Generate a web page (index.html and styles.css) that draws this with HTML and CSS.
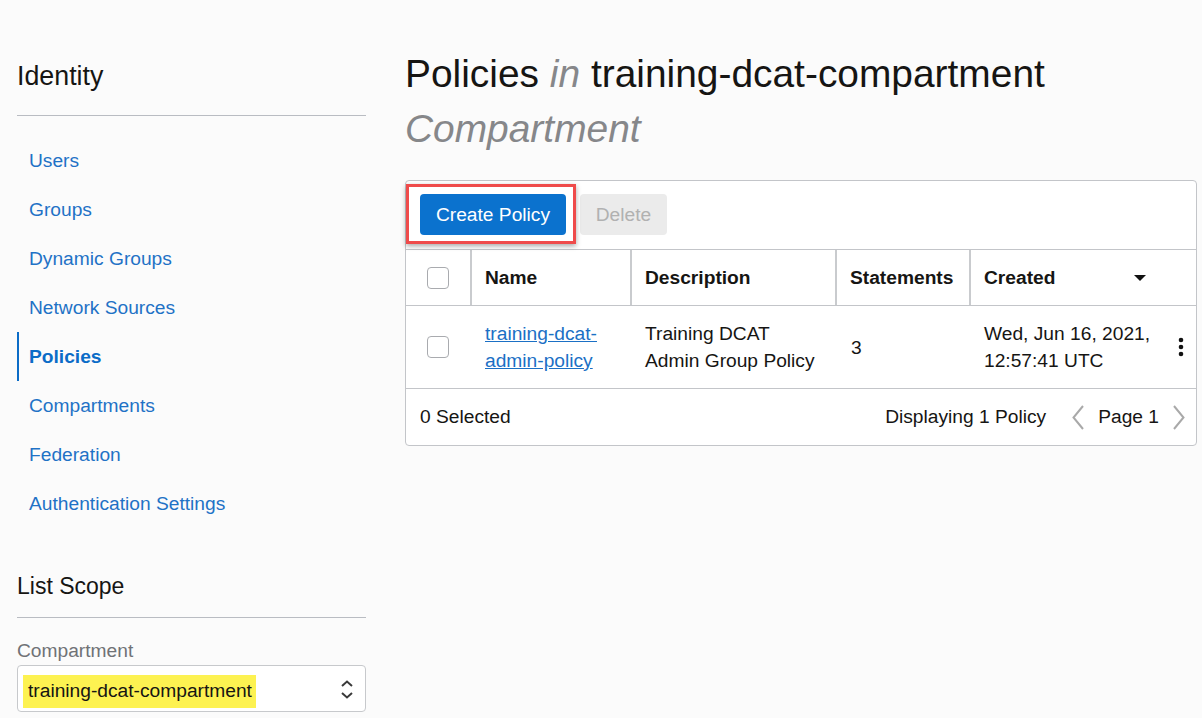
FILE: index.html
```html
<!DOCTYPE html>
<html lang="en">
<head>
<meta charset="utf-8">
<title>Policies</title>
<link rel="stylesheet" href="styles.css">
</head>
<body>
<div class="page">
  <aside class="sidebar">
    <h2 class="side-title">Identity</h2>
    <nav class="side-nav">
      <a class="nav-item" href="#">Users</a>
      <a class="nav-item" href="#">Groups</a>
      <a class="nav-item" href="#">Dynamic Groups</a>
      <a class="nav-item" href="#">Network Sources</a>
      <a class="nav-item active" href="#">Policies</a>
      <a class="nav-item" href="#">Compartments</a>
      <a class="nav-item" href="#">Federation</a>
      <a class="nav-item" href="#">Authentication Settings</a>
    </nav>
    <h3 class="scope-title">List Scope</h3>
    <div class="field-label">Compartment</div>
    <div class="select">
      <span class="select-value">training-dcat-compartment</span>
      <svg class="select-arrows" width="14" height="20" viewBox="0 0 14 20">
        <polyline points="2,6 7,1.5 12,6" fill="none" stroke="#3a3a3a" stroke-width="2"/>
        <polyline points="2,13 7,17.5 12,13" fill="none" stroke="#3a3a3a" stroke-width="2"/>
      </svg>
    </div>
  </aside>

  <main class="main">
    <h1 class="page-title">Policies <em class="muted">in</em> training-dcat-compartment <em class="muted">Compartment</em></h1>

    <section class="panel">
      <div class="toolbar">
        <div class="btn-wrap">
          <button class="btn btn-primary">Create Policy</button>
          <span class="highlight-box"></span>
        </div>
        <button class="btn btn-disabled">Delete</button>
      </div>

      <div class="grid head">
        <div class="cell cell-check"><span class="checkbox"></span></div>
        <div class="cell hcell">Name</div>
        <div class="cell hcell">Description</div>
        <div class="cell hcell">Statements</div>
        <div class="cell hcell sort-cell">Created
          <svg class="caret" width="12" height="6" viewBox="0 0 12 6"><polygon points="0,0 12,0 6,6" fill="#111"/></svg>
        </div>
      </div>

      <div class="grid row">
        <div class="cell cell-check"><span class="checkbox"></span></div>
        <div class="cell"><a class="link" href="#">training-dcat-admin-policy</a></div>
        <div class="cell">Training DCAT Admin Group Policy</div>
        <div class="cell cell-num">3</div>
        <div class="cell created-cell">
          <span>Wed, Jun 16, 2021,<br>12:57:41 UTC</span>
          <svg class="kebab" width="6" height="20" viewBox="0 0 6 20">
            <circle cx="3" cy="3" r="2.3" fill="#111"/>
            <circle cx="3" cy="10" r="2.3" fill="#111"/>
            <circle cx="3" cy="17" r="2.3" fill="#111"/>
          </svg>
        </div>
      </div>

      <div class="footer">
        <span>0 Selected</span>
        <div class="pager">
          <span>Displaying 1 Policy</span>
          <svg class="chev chev-left" width="12" height="25" viewBox="0 0 12 25"><polyline points="11,1 1.5,12.5 11,24" fill="none" stroke="#a9a9a9" stroke-width="2"/></svg>
          <span>Page 1</span>
          <svg class="chev chev-right" width="12" height="25" viewBox="0 0 12 25"><polyline points="1,1 10.5,12.5 1,24" fill="none" stroke="#a9a9a9" stroke-width="2"/></svg>
        </div>
      </div>
    </section>
  </main>
</div>
</body>
</html>
```
FILE: styles.css
```css
* { box-sizing: border-box; }

html, body {
  margin: 0;
  padding: 0;
  background: #fbfbfb;
  font-family: "Liberation Sans", Arial, sans-serif;
  font-size: 19.2px;
  color: #161513;
}

.page {
  display: flex;
  align-items: flex-start;
}

/* Sidebar */
.sidebar {
  width: 366px;
  padding: 60px 0 0 17px;
  flex-shrink: 0;
}

.side-title {
  margin: 0;
  font-size: 26.8px;
  font-weight: normal;
  line-height: 32px;
  padding-bottom: 23px;
  border-bottom: 1px solid #b9bcc2;
}

.side-nav {
  display: flex;
  flex-direction: column;
  margin-top: 20px;
}

.nav-item {
  display: block;
  height: 49px;
  line-height: 49px;
  padding-left: 10px;
  color: #1f72c6;
  text-decoration: none;
  border-left: 2px solid transparent;
}

.nav-item.active {
  font-weight: bold;
  color: #0b6cc7;
  border-left-color: #0b6cc7;
}

.scope-title {
  margin: 44px 0 0;
  font-size: 23px;
  font-weight: normal;
  line-height: 28px;
  padding-bottom: 17px;
  border-bottom: 1px solid #b9bcc2;
}

.field-label {
  margin-top: 22px;
  line-height: 22px;
  color: #707276;
}

.select {
  margin-top: 3px;
  height: 47px;
  border: 1px solid #c7c9cc;
  border-radius: 4px;
  background: #fff;
  display: flex;
  align-items: flex-start;
  justify-content: space-between;
  padding: 9px 11px 0 5px;
}

.select-value {
  display: inline-block;
  background: #fdf251;
  height: 33px;
  line-height: 32px;
  padding: 0 4px 0 5px;
  color: #161513;
}

.select-arrows {
  margin-top: 5px;
}

/* Main */
.main {
  margin-left: 39px;
  padding-top: 46px;
  width: 792px;
}

.page-title {
  margin: 0;
  font-size: 38.9px;
  font-weight: normal;
  line-height: 55px;
  color: #161513;
}

.muted {
  color: #86878a;
}

.panel {
  margin-top: 24px;
  background: #fff;
  border: 1px solid #c3c5c9;
  border-radius: 4px;
}

.toolbar {
  display: flex;
  gap: 14px;
  padding: 13px 14px 14px;
  border-bottom: 1px solid #c3c5c9;
}

.btn-wrap {
  position: relative;
}

.btn {
  font-family: inherit;
  font-size: 19.2px;
  height: 41px;
  border: none;
  border-radius: 4px;
  padding: 0;
  cursor: pointer;
}

.btn-primary {
  width: 146px;
  background: #0b72ce;
  color: #fff;
  position: relative;
  z-index: 1;
}

.btn-disabled {
  width: 87px;
  background: #ebebeb;
  color: #b1b1b1;
}

.highlight-box {
  position: absolute;
  left: -14px;
  top: -10px;
  width: 170px;
  height: 60px;
  border: 3px solid #ef4b4b;
  box-shadow: 0 2px 5px rgba(0, 0, 0, 0.35);
  z-index: 2;
  pointer-events: none;
}

.grid {
  display: grid;
  grid-template-columns: 64px 160px 205px 134px 1fr;
  border-bottom: 1px solid #c3c5c9;
}

.head {
  height: 56px;
}

.row {
  height: 83px;
}

.cell {
  display: flex;
  align-items: center;
  padding: 0 14px 0 15px;
  line-height: 27px;
}

.hcell {
  font-weight: bold;
  border-left: 2px solid #c9cbce;
  padding-left: 13px;
}

.cell-num { padding-left: 16px; }

.sort-cell {
  justify-content: space-between;
  padding-right: 50px;
}

.caret { margin-top: 1px; }

.cell-check {
  justify-content: center;
  padding: 0;
}

.checkbox {
  display: block;
  width: 22px;
  height: 22px;
  border: 1px solid #a9abaf;
  border-radius: 4px;
  background: #fff;
}

.link {
  color: #1b70c5;
  text-decoration: underline;
}

.created-cell {
  justify-content: space-between;
  padding-right: 12px;
}

.footer {
  height: 56px;
  display: flex;
  align-items: center;
  justify-content: space-between;
  padding: 0 11px 0 14px;
}

.pager {
  display: flex;
  align-items: center;
}

.chev-left {
  margin: 0 14px 0 26px;
}

.chev-right {
  margin-left: 14px;
}
```
